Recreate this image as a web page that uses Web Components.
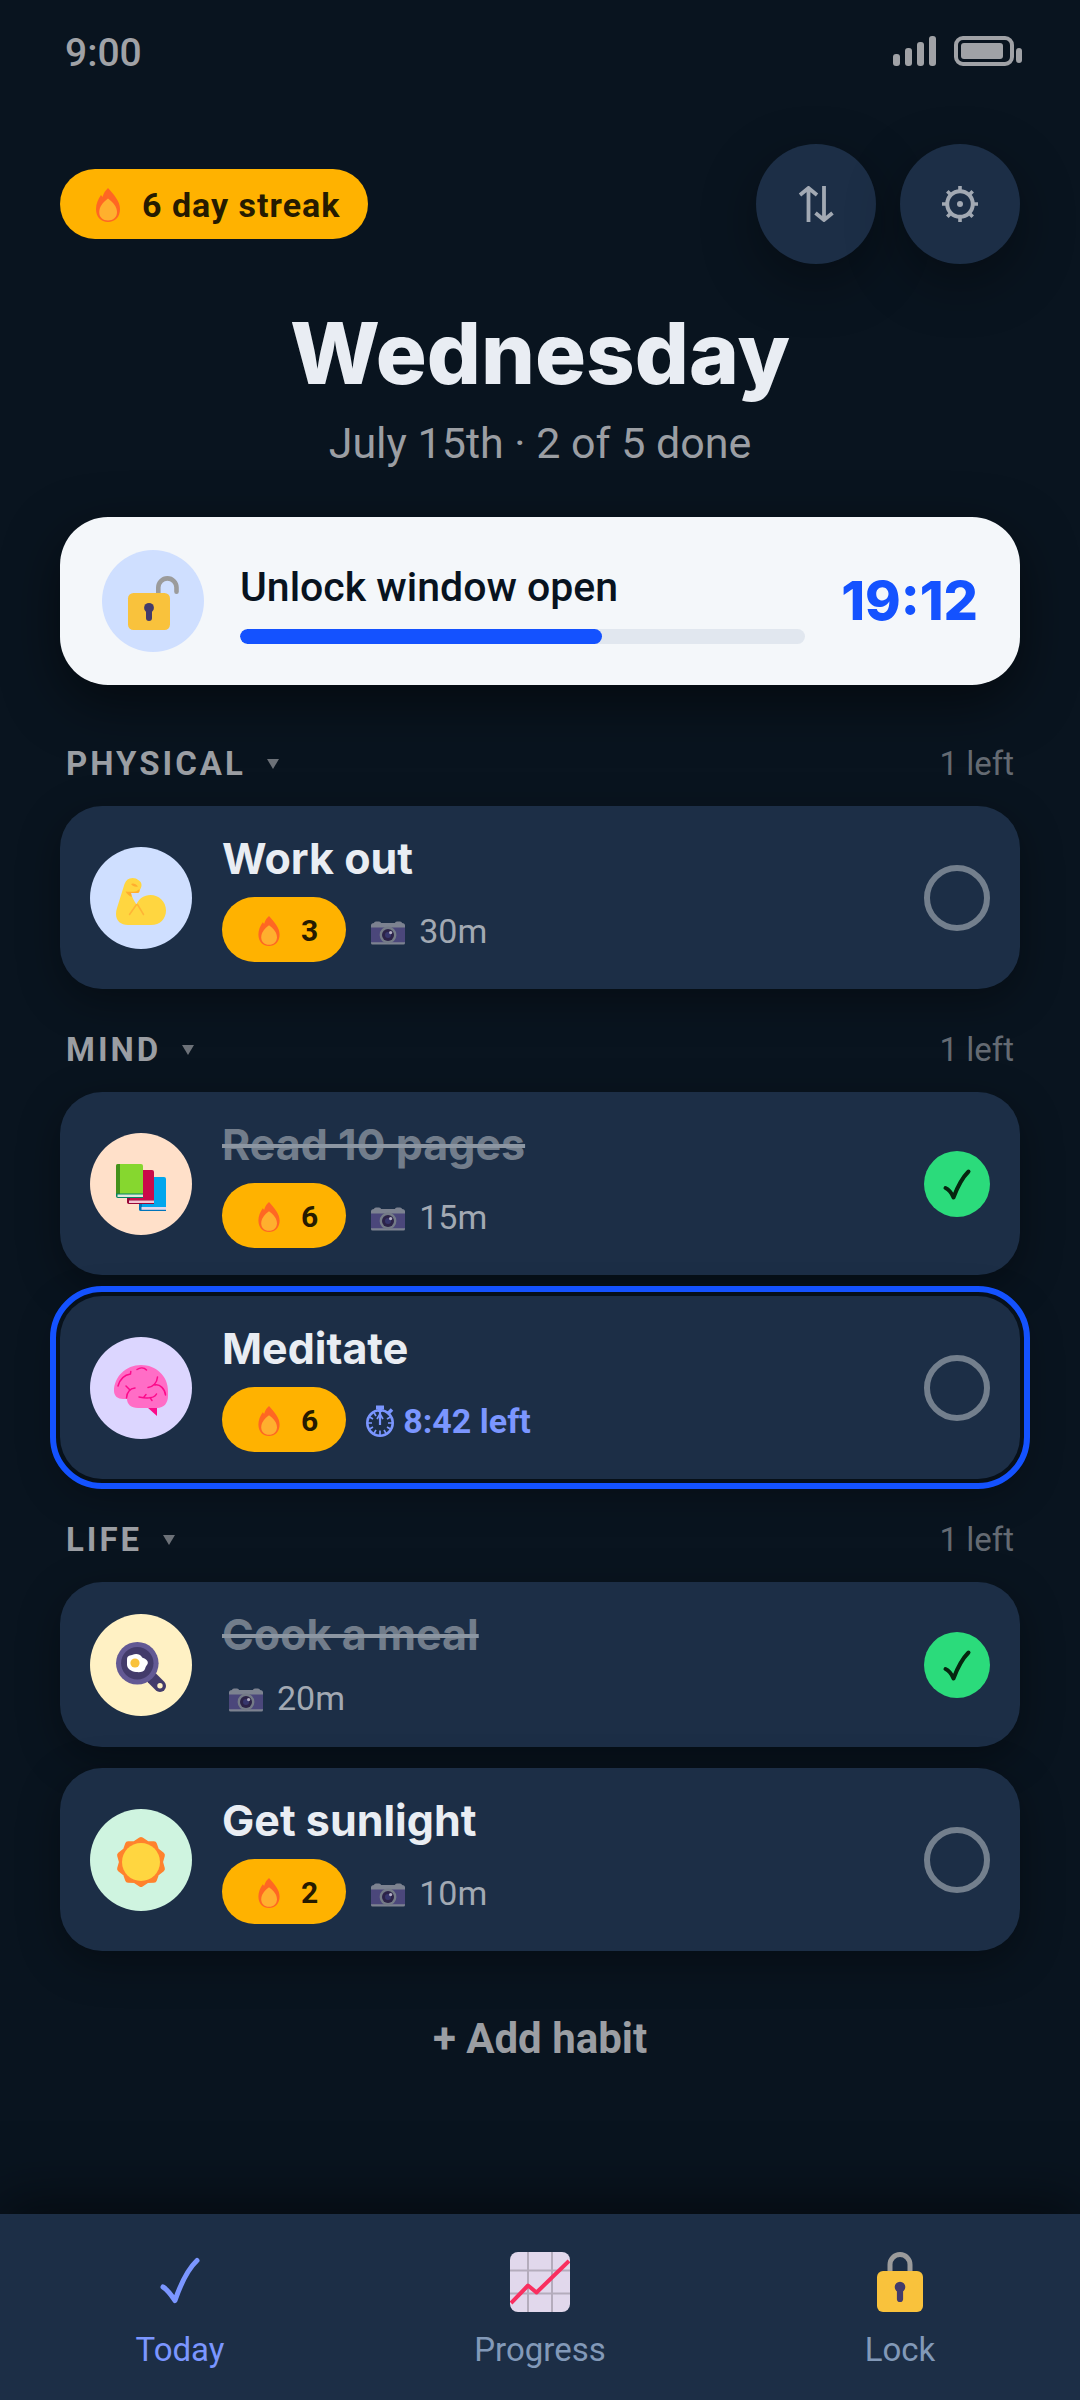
<!DOCTYPE html>
<html lang="en">
<head>
  <meta charset="UTF-8">
  <meta name="viewport" content="width=device-width, initial-scale=1.0">
  <title>Habits - Today</title>
  <style>
    :root {
      --bg: #09141f;
      --surface: #1c2e46;
      --text: #e9edf3;
      --muted: #9b9ea3;
      --faint: #646a72;
      --blue: #1452ff;
      --soft-blue: #7b96ff;
      --amber: #ffb200;
      --amber-ink: #261b00;
      --display: Inter, "Liberation Sans", sans-serif;
    }

    body {
      margin: 0;
      background: var(--bg);
      color: var(--text);
      font-family: Roboto, "Liberation Sans", sans-serif;
    }
  </style>
</head>
<body>
  <habit-app>
    <status-bar slot="status">9:00</status-bar>

    <streak-pill slot="streak" size="large">6 day streak</streak-pill>
    <round-button slot="actions" icon="sort" label="Sort habits"></round-button>
    <round-button slot="actions" icon="gear" label="Settings"></round-button>

    <span slot="day">Wednesday</span>
    <span slot="summary">July 15th · 2 of 5 done</span>

    <unlock-card value="64" time="19:12">Unlock window open</unlock-card>

    <habit-section name="PHYSICAL" left="1 left">
      <habit-card icon="arm" tint="#cfdfff" streak="3" time="30m">Work out</habit-card>
    </habit-section>

    <habit-section name="MIND" left="1 left">
      <habit-card icon="books" tint="#ffe0c9" streak="6" time="15m" done>Read 10 pages</habit-card>
      <habit-card icon="brain" tint="#dcd6ff" streak="6" timer="8:42 left" active>Meditate</habit-card>
    </habit-section>

    <habit-section name="LIFE" left="1 left">
      <habit-card icon="pan" tint="#fff1c4" time="20m" done>Cook a meal</habit-card>
      <habit-card icon="sun" tint="#cff4e0" streak="2" time="10m">Get sunlight</habit-card>
    </habit-section>

    <tab-bar slot="tabs">
      <tab-link icon="tick" href="#today" current>Today</tab-link>
      <tab-link icon="chart" href="#progress">Progress</tab-link>
      <tab-link icon="lock" href="#lock">Lock</tab-link>
    </tab-bar>
  </habit-app>

  <script>
    // Every drawing used on the page: [viewBox, markup]
    const ICONS = {
      flame: ["0 0 24 34", `
        <path fill="#ff6723" d="M12 0C8 4 7.500 6 6.500 9L5 7C2 11 0 16 0 21C0 29 5 34 12 34S24 29 24 21C24 13 18 7 12 0Z"/>
        <path fill="#ffb02e" d="M12 10.500C7 14 3.200 19 3.200 24C3.200 29.500 7 32.500 12 32.500S21 29.500 21 24C21 19 17 14 12 10.500Z"/>`],
      sort: ["0 0 36 36", `
        <g fill="none" stroke="#a2a9b3" stroke-width="3.800">
          <path d="M10.500 36V2.500M2 9L10.500 2L19 9"/>
          <path d="M26 0V33.500M17.500 27L26 34L34.500 27"/>
        </g>`],
      gear: ["0 0 36 36", `
        <g fill="none" stroke="#a2a9b3">
          <circle cx="18" cy="18" r="12.800" stroke-width="4"/>
          <path stroke-width="3.600" d="M18 0V5M18 31V36M0 18H5M31 18H36M5.300 5.300L9 9M27 27L30.700 30.700M5.300 30.700L9 27M27 9L30.700 5.300"/>
        </g>
        <circle cx="18" cy="18" r="3" fill="#a2a9b3"/>`],
      unlocked: ["0 0 102 102", `
        <path fill="none" stroke="#9b9b9b" stroke-width="4.600" stroke-linecap="round" d="M56.300 46V37.500A9.100 9.100 0 0 1 74.500 37.500V41.800"/>
        <rect x="26" y="43" width="42" height="37" rx="5.500" fill="#f9c23c"/>
        <circle cx="47" cy="57.800" r="4.900" fill="#433b6b"/>
        <path stroke="#433b6b" stroke-width="6" stroke-linecap="round" d="M47 59V68"/>`],
      lock: ["0 0 46 60", `
        <path fill="none" stroke="#9b9b9b" stroke-width="5" d="M13 22V12.500A10 10 0 0 1 33 12.500V22"/>
        <rect y="19" width="46" height="41" rx="6" fill="#f9c23c"/>
        <circle cx="23" cy="35" r="5.300" fill="#433b6b"/>
        <path stroke="#433b6b" stroke-width="6.200" stroke-linecap="round" d="M23 36V47"/>`],
      arm: ["0 0 102 102", `
        <path fill="#ffd640" d="M42.500 31C38.500 31 36 33 34.500 37L27 61C26.300 63 26 65 26 67C26 74 31 78 38 78H61C70 78 76 72 76 63.500C76 54.500 69 48 60.500 48C54 48 49 51.500 46.500 57.500C44 54 42 50 41 46H47C49 46 50 45 49.800 43C52 40 52.500 36 49 33.500C47 31.800 45 31 42.500 31Z"/>
        <path fill="#ffad2e" d="M35.500 44.500C39 45 44 45 46.500 44.200L49.500 42C49.500 45.500 48.500 46 47 46H41L41.700 50C39 49 37 47 35.500 44.500ZM41 37C43 35.500 46 37 48 39.500C45 40 43 39.500 41 37Z"/>
        <path fill="none" stroke="#ffb436" stroke-width="1.500" stroke-linecap="round" d="M39.500 67.500L46.500 57.500M47.500 57.500L53.500 67.500"/>`],
      books: ["0 0 102 102", `
        <rect x="49" y="44" width="27" height="34" rx="2" fill="#00a6ed"/>
        <path fill="#0074ba" d="M49 71H52V74.500H76V78H51Q49 78 49 76Z"/>
        <path fill="#e1d8ec" d="M51.500 74H76V76.800H51.500Z"/>
        <rect x="37" y="37" width="27" height="33.500" rx="2" fill="#ca0b4a"/>
        <path fill="#990838" d="M37 62H40V67H64V71H39Q37 71 37 69Z"/>
        <path fill="#f3c6d4" d="M39 67.500H64V70H39Z"/>
        <rect x="26" y="31" width="27" height="33" rx="2" fill="#86d72f"/>
        <path fill="#44911b" d="M28 31H30V61H26V33Q26 31 28 31Z"/>
        <path fill="#008463" d="M26 60.500H53V65H28Q26 65 26 63Z"/>
        <path fill="#e1e6dc" d="M27.500 61.500H53V64H27.500Z"/>`],
      brain: ["0 0 102 102", `
        <path fill="#fc0a8a" d="M57.500 70.500H67V79Z"/>
        <path fill="#ff6dc6" d="M51 28C36 28 24 40 24 54C24 59 28 62 33 62H37C37 67 41 71 48 71H67C74 71 78 66 78 59V54C78 39 66 28 51 28Z"/>
        <g fill="none" stroke="#fc0a8a" stroke-width="1.500" stroke-linecap="round">
          <path d="M47 32.500C50 30.500 54 30.500 56.500 33M28 49C30 42 34 38 40.500 37M40.500 37L40.800 34.500M36 49L40 53M45 51C40 51.500 37 55 36.500 61"/>
          <path d="M67.500 40C67 46 63 50 58 50.500M65 48C70 47 75 52 75.500 58M49 60C54 61 64 62 66.500 57M60 60.500L62 63.500M54 60L56 57.500"/>
        </g>`],
      pan: ["0 0 102 102", `
        <path stroke="#433b6b" stroke-width="12" stroke-linecap="round" d="M62 64L70 72"/>
        <circle cx="70" cy="71.800" r="2.700" fill="#fff1c4"/>
        <circle cx="47.300" cy="49.300" r="21.300" fill="#635994"/>
        <circle cx="47.300" cy="49.300" r="16.200" fill="#433b6b"/>
        <path fill="#fff" d="M37 46C37 42 39 41.500 42 41C46 39 50 40 51.500 42.500C52 44 54 44 56 45.500C58 47 58.500 49 57 51C56 52 55.500 53 55 55C54 58 50 58.500 46 58C41 57.500 37.500 55 37 51Z"/>
        <circle cx="45" cy="49" r="4.600" fill="#f9c23c"/>`],
      sun: ["0 0 102 102", `
        <g fill="#ff822d">
          <circle cx="51" cy="53" r="20.500"/>
          <path stroke="#ff822d" stroke-width="6" stroke-linejoin="round" d="M51 31L57 35L63.900 35.200L66.200 41.700L71.900 46.200L70 53L71.900 59.800L66.200 64.300L63.900 70.800L57 71L51 75L45 71L38.100 70.800L35.800 64.300L30.100 59.800L32 53L30.100 46.200L35.800 41.700L38.100 35.200L45 35Z"/>
        </g>
        <circle cx="51" cy="53" r="19" fill="#ffd640"/>`],
      camera: ["0 0 48 36", `
        <path fill="#7c8290" d="M10 8Q10 6.500 12 6.500H15Q17 6.500 17 8H31Q31 6.500 33 6.500H36Q38 6.500 38 8Q41 8 41 10.500V28Q41 29.500 39.500 29.500H8.500Q7 29.500 7 28V10.500Q7 8 10 8Z"/>
        <path fill="#4b477b" d="M7 12.500H41V27.300H7Z"/>
        <circle cx="24" cy="20" r="8.400" fill="#747b87"/>
        <circle cx="24" cy="20" r="6" fill="#2c2348"/>
        <circle cx="24" cy="20" r="3" fill="#37366c"/>
        <circle cx="26.600" cy="17.600" r="1.600" fill="#b3afc5"/>`],
      stopwatch: ["0 0 32 36", `
        <g fill="none" stroke="#7b96ff">
          <circle cx="16" cy="20" r="12.700" stroke-width="2.600"/>
          <path stroke-width="4" d="M12 4.500H20M16 4V9"/>
          <path stroke-width="3.500" d="M24.500 10L28 6.500"/>
          <path stroke-width="2.200" d="M16 9V22"/>
          <path stroke-width="1.700" d="M13 16L16 11L19 16M16 27.500V32M4 20H8M24 20H28M10 9.600L12 13M20 27L22 30.400M10 30.400L12 27M5.600 14L9 16M23 24L26.400 26M5.600 26L9 24M23 16L26.400 14"/>
        </g>`],
      check: ["0 0 66 66", `
        <path fill="none" stroke="#06250f" stroke-width="4" stroke-linecap="round" stroke-linejoin="round" d="M21.500 37C25 38.500 28 43 29.500 46.500C33 37 38 27 44.500 20.500"/>`],
      tick: ["0 0 60 60", `
        <path fill="none" stroke="#7b96ff" stroke-width="5" stroke-linecap="round" stroke-linejoin="round" d="M13 35C18 38 22 44 25 48.500C30 34 37 18 47 8.500"/>`],
      chart: ["0 0 60 60", `
        <rect width="60" height="60" rx="8" fill="#e1d8ec"/>
        <path fill="none" stroke="#b4acbc" stroke-width="2" d="M18 0V60M42 0V60M0 18.500H60M0 41.500H60"/>
        <path fill="none" stroke="#f92f60" stroke-width="4" stroke-linejoin="round" d="M1 51L18 33.500L26.500 40.500L59 9"/>`],
      caret: ["0 0 12 10", `<path fill="#6c7178" d="M0 0H12L6 10Z"/>`]
    };

    const icon = (name) => {
      const [box, markup] = ICONS[name];
      return `<svg class="${name}" viewBox="${box}" aria-hidden="true">${markup}</svg>`;
    };

    class HabitApp extends HTMLElement {
      constructor() {
        super();
        const shadow = this.attachShadow({ mode: "open" });
        shadow.innerHTML = `
          <style>
            :host {
              display: flex;
              flex-direction: column;
              min-height: 100vh;
            }

            header, main {
              padding: 0 60px;
            }

            .top {
              display: flex;
              align-items: center;
              justify-content: space-between;
              margin-top: 66px;
            }

            .actions {
              display: flex;
              gap: 24px;
            }

            h1 {
              margin: 42px 0 0;
              font-family: var(--display);
              font-size: 85px;
              line-height: 96px;
              font-weight: 800;
              text-align: center;
            }

            p {
              margin: 16px 0 0;
              font-size: 43px;
              line-height: 50px;
              color: var(--muted);
              text-align: center;
            }

            main {
              flex: 1;
              padding-top: 49px;
            }

            .add {
              display: block;
              margin: 54px auto;
              padding: 10px 24px;
              border: 0;
              background: none;
              color: var(--muted);
              font: 700 42px/48px Roboto, sans-serif;
              cursor: pointer;
            }
          </style>

          <slot name="status"></slot>
          <header>
            <div class="top">
              <slot name="streak"></slot>
              <div class="actions"><slot name="actions"></slot></div>
            </div>
            <h1><slot name="day"></slot></h1>
            <p><slot name="summary"></slot></p>
          </header>
          <main>
            <slot></slot>
            <button class="add" type="button">+ Add habit</button>
          </main>
          <slot name="tabs"></slot>
        `;
      }
    }

    class StatusBar extends HTMLElement {
      constructor() {
        super();
        const shadow = this.attachShadow({ mode: "open" });
        shadow.innerHTML = `
          <style>
            :host {
              display: flex;
              align-items: flex-start;
              justify-content: space-between;
              padding: 28px 58px 0 65px;
              font-size: 39px;
              line-height: 50px;
              font-weight: 500;
              color: #a0a2a6;
            }

            svg {
              width: 129px;
              height: 30px;
              margin-top: 8px;
            }
          </style>

          <slot></slot>
          <svg viewBox="0 0 129 30" role="img" aria-label="Signal and battery">
            <g fill="#a0a2a6">
              <rect y="18" width="7" height="12" rx="3"/>
              <rect x="12" y="12" width="7" height="18" rx="3"/>
              <rect x="24" y="6" width="7" height="24" rx="3"/>
              <rect x="36" width="7" height="30" rx="3"/>
              <rect x="68" y="7" width="42" height="16" rx="3"/>
              <rect x="123" y="12" width="6" height="15" rx="3"/>
            </g>
            <rect x="63" y="2" width="56" height="26" rx="7" fill="none" stroke="#a0a2a6" stroke-width="4"/>
          </svg>
        `;
      }
    }

    class StreakPill extends HTMLElement {
      constructor() {
        super();
        const shadow = this.attachShadow({ mode: "open" });
        shadow.innerHTML = `
          <style>
            :host {
              display: inline-flex;
              align-items: center;
              gap: 21px;
              padding: 2px 28px 0 36px;
              border-radius: 36px;
              background: var(--amber);
              color: var(--amber-ink);
              font-size: 30px;
              line-height: 63px;
              font-weight: 700;
            }

            :host([size="large"]) {
              gap: 22px;
              font-size: 34px;
              line-height: 68px;
              letter-spacing: 1px;
            }

            svg {
              width: 22px;
              height: 30px;
            }

            :host([size="large"]) svg {
              width: 24px;
              height: 34px;
            }
          </style>

          ${icon("flame")}
          <span><slot></slot></span>
        `;
      }
    }

    class RoundButton extends HTMLElement {
      constructor() {
        super();
        const shadow = this.attachShadow({ mode: "open" });
        shadow.innerHTML = `
          <style>
            :host {
              display: block;
            }

            button {
              display: grid;
              place-items: center;
              width: 120px;
              height: 120px;
              border: 0;
              border-radius: 50%;
              background: var(--surface);
              box-shadow: 0 18px 54px rgba(0, 0, 0, 0.35);
              cursor: pointer;
            }

            svg {
              width: 36px;
              height: 36px;
            }
          </style>

          <button type="button" aria-label="${this.getAttribute("label")}">${icon(this.getAttribute("icon"))}</button>
        `;
      }
    }

    class UnlockCard extends HTMLElement {
      constructor() {
        super();
        const shadow = this.attachShadow({ mode: "open" });
        shadow.innerHTML = `
          <style>
            :host {
              display: flex;
              align-items: center;
              gap: 36px;
              padding: 33px 42px;
              border-radius: 48px;
              background: #f4f7fa;
              color: #08131f;
              box-shadow: 0 18px 54px rgba(0, 0, 0, 0.5);
            }

            .badge {
              flex: none;
              width: 102px;
              height: 102px;
              border-radius: 50%;
              background: #cfdfff;
            }

            .body {
              flex: 1;
            }

            label {
              display: block;
              padding-top: 4px;
              font-size: 41px;
              line-height: 48px;
              font-weight: 500;
            }

            progress {
              display: block;
              width: 100%;
              height: 15px;
              margin-top: 18px;
              border-radius: 8px;
              overflow: hidden;
              appearance: none;
              background: #e1e7ef;
            }

            progress::-webkit-progress-bar {
              background: #e1e7ef;
            }

            progress::-webkit-progress-value {
              border-radius: 8px;
              background: var(--blue);
            }

            time {
              font-family: var(--display);
              font-size: 54px;
              line-height: 64px;
              font-weight: 800;
              color: var(--blue);
            }
          </style>

          <div class="badge">${icon("unlocked")}</div>
          <div class="body">
            <label for="window"><slot></slot></label>
            <progress id="window" max="100" value="${this.getAttribute("value")}"></progress>
          </div>
          <time>${this.getAttribute("time")}</time>
        `;
      }
    }

    class HabitSection extends HTMLElement {
      constructor() {
        super();
        const shadow = this.attachShadow({ mode: "open" });
        shadow.innerHTML = `
          <style>
            :host {
              display: block;
              padding-top: 39px;
            }

            :host(:first-of-type) {
              padding-top: 57px;
            }

            .head {
              display: flex;
              justify-content: space-between;
              margin-bottom: 20px;
              padding: 0 6px;
              font-size: 33px;
              line-height: 44px;
              color: var(--faint);
            }

            h2 {
              margin: 0;
              font-size: 33px;
            }

            button {
              display: flex;
              align-items: center;
              gap: 21px;
              padding: 0;
              border: 0;
              background: none;
              color: var(--muted);
              font: 700 33px/44px Roboto, sans-serif;
              letter-spacing: 3px;
              cursor: pointer;
            }

            svg {
              width: 12px;
              height: 10px;
            }

            .list {
              display: flex;
              flex-direction: column;
              gap: 21px;
            }
          </style>

          <div class="head">
            <h2><button type="button" aria-expanded="true">${this.getAttribute("name")}${icon("caret")}</button></h2>
            <span>${this.getAttribute("left")}</span>
          </div>
          <div class="list"><slot></slot></div>
        `;
      }
    }

    class HabitCard extends HTMLElement {
      constructor() {
        super();
        const shadow = this.attachShadow({ mode: "open" });
        const streak = this.getAttribute("streak");
        const time = this.getAttribute("time");
        const timer = this.getAttribute("timer");
        shadow.innerHTML = `
          <style>
            :host {
              display: flex;
              align-items: center;
              gap: 30px;
              padding: 27px 30px;
              border-radius: 42px;
              background: var(--surface);
              box-shadow: 0 12px 42px rgba(0, 0, 0, 0.35);
            }

            :host([active]) {
              outline: 6px solid var(--blue);
              outline-offset: 4px;
            }

            .badge {
              flex: none;
              width: 102px;
              height: 102px;
              border-radius: 50%;
              background: ${this.getAttribute("tint")};
            }

            .body {
              flex: 1;
            }

            label {
              display: block;
              width: fit-content;
              font-family: var(--display);
              font-size: 43px;
              line-height: 50px;
              font-weight: 700;
            }

            :host([done]) label {
              color: #727d8b;
              text-decoration: line-through 4px #8c96a2;
              text-decoration-skip-ink: none;
            }

            .meta {
              display: flex;
              align-items: center;
              gap: 18px;
              margin-top: 14px;
            }

            .time, .timer {
              display: flex;
              align-items: center;
              gap: 7px;
              padding-top: 3px;
              font-size: 34px;
              line-height: 44px;
              color: #a2a9b3;
            }

            .timer {
              font-weight: 700;
              color: var(--soft-blue);
            }

            .camera {
              width: 48px;
              height: 36px;
              margin-top: 4px;
            }

            .stopwatch {
              width: 32px;
              height: 36px;
            }

            .tick {
              display: grid;
              flex: none;
            }

            .tick > * {
              grid-area: 1 / 1;
            }

            input {
              box-sizing: border-box;
              width: 66px;
              height: 66px;
              margin: 0;
              border: 6px solid #737f8d;
              border-radius: 50%;
              appearance: none;
              cursor: pointer;
            }

            input:checked {
              border: 0;
              background: #2bdb7b;
            }

            .check {
              width: 66px;
              height: 66px;
              visibility: hidden;
              pointer-events: none;
            }

            input:checked + .check {
              visibility: visible;
            }
          </style>

          <div class="badge">${icon(this.getAttribute("icon"))}</div>
          <div class="body">
            <label for="done"><slot></slot></label>
            <div class="meta">
              ${streak ? `<streak-pill>${streak}</streak-pill>` : ""}
              ${time ? `<span class="time">${icon("camera")}${time}</span>` : ""}
              ${timer ? `<span class="timer">${icon("stopwatch")}${timer}</span>` : ""}
            </div>
          </div>
          <div class="tick">
            <input id="done" type="checkbox" ${this.hasAttribute("done") ? "checked" : ""}>
            ${icon("check")}
          </div>
        `;
      }
    }

    class TabBar extends HTMLElement {
      constructor() {
        super();
        const shadow = this.attachShadow({ mode: "open" });
        shadow.innerHTML = `
          <style>
            :host {
              display: block;
              background: var(--surface);
              box-shadow: 0 -12px 54px rgba(0, 0, 0, 0.5);
            }

            nav {
              display: grid;
              grid-template-columns: repeat(3, 1fr);
              padding: 38px 0 28px;
            }
          </style>

          <nav><slot></slot></nav>
        `;
      }
    }

    class TabLink extends HTMLElement {
      constructor() {
        super();
        const shadow = this.attachShadow({ mode: "open" });
        shadow.innerHTML = `
          <style>
            :host {
              display: block;
              color: #8299b8;
            }

            :host([current]) {
              color: var(--soft-blue);
            }

            a {
              display: flex;
              flex-direction: column;
              align-items: center;
              gap: 16px;
              color: inherit;
              font-size: 33px;
              line-height: 44px;
              text-decoration: none;
            }

            svg {
              height: 60px;
            }
          </style>

          <a href="${this.getAttribute("href")}">${icon(this.getAttribute("icon"))}<span><slot></slot></span></a>
        `;
      }
    }

    customElements.define("habit-app", HabitApp);
    customElements.define("status-bar", StatusBar);
    customElements.define("streak-pill", StreakPill);
    customElements.define("round-button", RoundButton);
    customElements.define("unlock-card", UnlockCard);
    customElements.define("habit-section", HabitSection);
    customElements.define("habit-card", HabitCard);
    customElements.define("tab-bar", TabBar);
    customElements.define("tab-link", TabLink);
  </script>
</body>
</html>
